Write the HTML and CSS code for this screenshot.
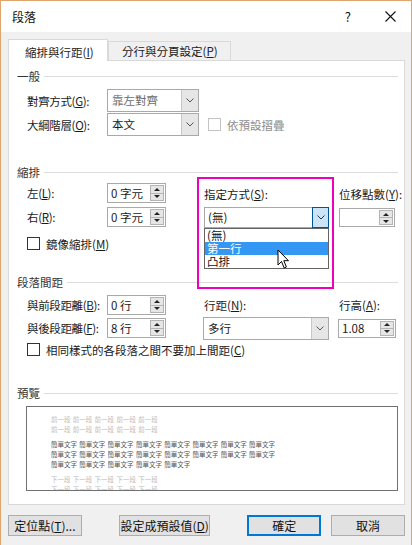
FILE: index.html
```html
<!DOCTYPE html>
<html lang="zh-Hant">
<head>
<meta charset="utf-8">
<title>段落</title>
<link rel="stylesheet" href="styles.css">
</head>
<body>
<div class="window">
  <div class="titlebar">
    <span class="title">段落</span>
    <span class="help">?</span>
    <svg class="close" width="11" height="11" viewBox="0 0 11 11"><path d="M0.5 0.5 L10.5 10.5 M10.5 0.5 L0.5 10.5" stroke="#111" stroke-width="1.1" fill="none"/></svg>
  </div>
  <div class="client">
    <div class="tabs">
      <div class="tab active">縮排與行距(<u>I</u>)</div>
      <div class="tab">分行與分頁設定(<u>P</u>)</div>
    </div>
    <div class="panel">
      <div class="gtitle">一般</div>
      <div class="rows r-general">
        <div class="row">
          <span class="lbl">對齊方式(<u>G</u>):</span>
          <div class="combo w92"><span class="val gray">靠左對齊</span><span class="btn"><svg width="8" height="5" viewBox="0 0 8 5"><polyline points="0.5,0.5 4,4 7.5,0.5" fill="none" stroke="#555"/></svg></span></div>
        </div>
        <div class="row r2">
          <span class="lbl">大綱階層(<u>O</u>):</span>
          <div class="combo w92"><span class="val">本文</span><span class="btn"><svg width="8" height="5" viewBox="0 0 8 5"><polyline points="0.5,0.5 4,4 7.5,0.5" fill="none" stroke="#555"/></svg></span></div>
          <span class="cb disabled ml9"></span><span class="cbtext gray2">依預設摺疊</span>
        </div>
      </div>

      <div class="gtitle mt28">縮排</div>
      <div class="indent">
        <div class="col-left">
          <div class="row i1">
            <span class="lbl">左(<u>L</u>):</span>
            <div class="spin w59"><span class="val">0 字元</span><span class="arrows"><span class="up"></span><span class="dn"></span></span></div>
          </div>
          <div class="row i2">
            <span class="lbl">右(<u>R</u>):</span>
            <div class="spin w59"><span class="val">0 字元</span><span class="arrows"><span class="up"></span><span class="dn"></span></span></div>
          </div>
          <div class="row i3">
            <span class="cb"></span><span class="cbtext">鏡像縮排(<u>M</u>)</span>
          </div>
        </div>
        <div class="col-mid">
          <div class="mark"></div>
          <div class="clbl">指定方式(<u>S</u>):</div>
          <div class="combo w125 h21 open"><span class="val">(無)</span><span class="btn blue"><svg width="8" height="5" viewBox="0 0 8 5"><polyline points="0.5,0.5 4,4 7.5,0.5" fill="none" stroke="#333"/></svg></span>
            <div class="list">
              <div class="opt">(無)</div>
              <div class="opt sel">第一行</div>
              <div class="opt">凸排</div>
              <svg class="cursor" width="13" height="21" viewBox="0 0 13 21"><path d="M1 1 L1 16 L4.5 12.5 L7.2 19 L9.4 18 L6.8 11.7 L11.5 11.7 Z" fill="#fff" stroke="#000" stroke-width="1" stroke-linejoin="round"/></svg>
            </div>
          </div>
        </div>
        <div class="col-right">
          <div class="clbl">位移點數(<u>Y</u>):</div>
          <div class="spin w56 h19 mt6"><span class="val"></span><span class="arrows"><span class="up"></span><span class="dn"></span></span></div>
        </div>
      </div>

      <div class="gtitle mt24">段落間距</div>
      <div class="spacing">
        <div class="row s1">
          <span class="lbl">與前段距離(<u>B</u>):</span>
          <div class="spin w59"><span class="val">0 行</span><span class="arrows"><span class="up"></span><span class="dn"></span></span></div>
          <span class="mlbl">行距(<u>N</u>):</span>
          <span class="rlbl">行高(<u>A</u>):</span>
        </div>
        <div class="row s2">
          <span class="lbl">與後段距離(<u>F</u>):</span>
          <div class="spin w59"><span class="val">8 行</span><span class="arrows"><span class="up"></span><span class="dn"></span></span></div>
          <div class="combo w126 h23 mlc"><span class="val">多行</span><span class="btn"><svg width="8" height="5" viewBox="0 0 8 5"><polyline points="0.5,0.5 4,4 7.5,0.5" fill="none" stroke="#555"/></svg></span></div>
          <div class="spin w58 h19 rlc"><span class="val">1.08</span><span class="arrows"><span class="up"></span><span class="dn"></span></span></div>
        </div>
        <div class="row s3">
          <span class="cb"></span><span class="cbtext">相同樣式的各段落之間不要加上間距(<u>C</u>)</span>
        </div>
      </div>

      <div class="gtitle mt29">預覽</div>
      <div class="preview">
        <div class="pl light"><span>前一段</span><span>前一段</span><span>前一段</span><span>前一段</span><span>前一段</span></div>
        <div class="pl light"><span>前一段</span><span>前一段</span><span>前一段</span><span>前一段</span><span>前一段</span></div>
        <div class="pl dark gap"><span>簡單文字</span><span>簡單文字</span><span>簡單文字</span><span>簡單文字</span><span>簡單文字</span><span>簡單文字</span><span>簡單文字</span><span>簡單文字</span></div>
        <div class="pl dark"><span>簡單文字</span><span>簡單文字</span><span>簡單文字</span><span>簡單文字</span><span>簡單文字</span><span>簡單文字</span><span>簡單文字</span><span>簡單文字</span></div>
        <div class="pl dark"><span>簡單文字</span><span>簡單文字</span><span>簡單文字</span><span>簡單文字</span><span>簡單文字</span></div>
        <div class="pl light gap"><span>下一段</span><span>下一段</span><span>下一段</span><span>下一段</span><span>下一段</span></div>
        <div class="pl light"><span>下一段</span><span>下一段</span><span>下一段</span><span>下一段</span><span>下一段</span></div>
      </div>
    </div>
    <div class="footer">
      <div class="button w74">定位點(<u>T</u>)...</div>
      <div class="button w92 ml37">設定成預設值(<u>D</u>)</div>
      <div class="button w74 ml37 primary">確定</div>
      <div class="button w74 ml10">取消</div>
    </div>
  </div>
</div>
</body>
</html>
```

FILE: styles.css
```css
* { box-sizing: border-box; }
body {
  margin: 0;
  font-family: "Noto Sans CJK TC", "Noto Sans", sans-serif;
  font-size: 11.5px;
  color: #1a1a1a;
}
u { text-decoration: underline; text-underline-offset: 1px; }

.window {
  width: 412px;
  height: 545px;
  border: 1px solid #dfa56b;
  border-bottom: none;
  background: #f0f0f0;
  overflow: hidden;
  display: flex;
  flex-direction: column;
}
.titlebar {
  height: 31px;
  flex: none;
  background: #fff;
  display: flex;
  align-items: center;
  padding-left: 11px;
}
.title { flex: 1; font-size: 12px; line-height: 16px; color: #111; }
.help { font-size: 13px; line-height: 16px; margin-right: 34px; color: #111; }
.close { margin-right: 15px; }

.client { padding: 7px 6px 0 7px; flex: 1; }

.tabs {
  display: flex;
  align-items: flex-end;
  height: 22px;
  position: relative;
  z-index: 1;
}
.tab {
  width: 123px;
  height: 19px;
  margin-bottom: 1px;
  border: 1px solid #d9d9d9;
  border-bottom: none;
  background: #f0f0f0;
  line-height: 19px;
  padding-left: 13px;
  color: #222;
}
.tab.active {
  width: 100px;
  height: 22px;
  margin-bottom: 0;
  background: #fff;
  padding-left: 16px;
  padding-top: 2px;
  line-height: 20px;
}

.panel {
  margin-top: -1px;
  height: 445px;
  background: #fff;
  border: 1px solid #d9d9d9;
  padding: 7px 6px 0 8px;
}
.gtitle {
  display: flex;
  align-items: center;
  height: 16px;
  line-height: 16px;
  color: #333;
}
.gtitle::after {
  content: "";
  flex: 1;
  border-top: 1px solid #dcdcdc;
  margin-left: 4px;
}
.mt28 { margin-top: 28px; }
.mt24 { margin-top: 24px; }
.mt29 { margin-top: 29px; }
.mt6 { margin-top: 6px; }

.row { display: flex; align-items: center; }
.lbl { width: 80px; flex: none; line-height: 16px; white-space: nowrap; letter-spacing: -0.35px; }

.r-general { margin: 5px 0 0 10px; }
.r-general .row { height: 23px; }
.r-general .r2 { margin-top: 1px; }

.combo {
  position: relative;
  display: flex;
  height: 23px;
  border: 1px solid #a9a9a9;
  background: #fff;
}
.combo .val { flex: 1; padding-left: 4px; line-height: 21px; }
.combo .btn {
  width: 17px;
  background: #e6e6e6;
  border-left: 1px solid #c8c8c8;
  display: flex;
  align-items: center;
  justify-content: center;
}
.combo .btn.blue {
  width: 17px;
  background: #cce4f7;
  border: 1px solid #005499;
  margin: -1px -1px -1px 0;
}
.w92 { width: 92px; }
.w125 { width: 125px; }
.w126 { width: 126px; }
.h21 { height: 21px; }
.h21 .val { line-height: 19px; padding-left: 3px; }
.h23 { height: 23px; }
.gray { color: #6d6d6d; }
.gray2 { color: #8d8d8d; }

.cb {
  width: 13px;
  height: 13px;
  flex: none;
  border: 1px solid #333;
  background: #fff;
}
.cb.disabled { border-color: #c4c4c4; }
.ml9 { margin-left: 9px; }
.cbtext { margin-left: 6px; line-height: 16px; white-space: nowrap; }

.spin {
  display: flex;
  flex: none;
  height: 20px;
  border: 1px solid #a9a9a9;
  background: #fff;
}
.spin .val { flex: 1; padding-left: 3px; line-height: 18px; }
.spin .arrows {
  width: 14px;
  margin: 1px 1px 1px 0;
  display: flex;
  flex-direction: column;
  border: 1px solid #b4b4b4;
  background: #e6e6e6;
}
.spin .arrows span {
  flex: 1;
  display: flex;
  align-items: center;
  justify-content: center;
}
.spin .arrows .dn { border-top: 1px solid #b4b4b4; }
.spin .arrows .up::before {
  content: "";
  border-left: 3px solid transparent;
  border-right: 3px solid transparent;
  border-bottom: 3px solid #222;
}
.spin .arrows .dn::before {
  content: "";
  border-left: 3px solid transparent;
  border-right: 3px solid transparent;
  border-top: 3px solid #222;
}
.w59 { width: 59px; }
.w58 { width: 58px; }
.w56 { width: 56px; }
.h19 { height: 19px; }
.h19 .val { line-height: 17px; }

.indent { display: flex; margin-left: 10px; }
.col-left { width: 139px; }
.col-left .i1 { margin-top: 3px; }
.col-left .i2 { margin-top: 4px; }
.col-left .i3 { margin-top: 10px; height: 13px; }
.col-mid { position: relative; margin-left: 38px; width: 125px; }
.col-right { margin-left: 10px; width: 56px; }
.clbl { margin-top: 6px; line-height: 16px; white-space: nowrap; }
.col-mid .combo { margin-top: 5px; }

.mark {
  position: absolute;
  left: -7px;
  top: -3px;
  width: 137px;
  height: 112px;
  border: 2px solid #ee00bf;
}
.list {
  position: absolute;
  left: -1px;
  top: 20px;
  width: 125px;
  height: 41px;
  background: #fff;
  border: 1px solid #646464;
  z-index: 2;
}
.opt { height: 13px; line-height: 13px; padding-left: 2px; color: #111; }
.opt.sel {
  background: #3397f3;
  color: #fff;
  outline: 1px dotted #c07a30;
  outline-offset: -1px;
}
.cursor { position: absolute; left: 72px; top: 20px; }

.spacing { margin: 5px 0 0 10px; }
.spacing .row { height: 20px; }
.spacing .s2 { margin-top: 3px; }
.spacing .s3 { margin-top: 5px; height: 13px; }
.mlbl { margin-left: 38px; width: 135px; line-height: 16px; }
.rlbl { line-height: 16px; }
.mlc { margin-left: 37px; }
.rlc { margin-left: 9px; }

.preview {
  margin: 5px 0 0 9px;
  width: 372px;
  height: 85px;
  border: 1px solid #707070;
  padding: 7px 0 0 24px;
  overflow: hidden;
}
.pl {
  display: flex;
  gap: 2.3px;
  font-size: 6.5px;
  line-height: 10px;
  height: 10px;
  white-space: nowrap;
}
.pl.light span { width: 19.5px; }
.pl.dark span { width: 26px; }
.pl span { flex: none; overflow: hidden; }
.pl.light { color: #bdbdbd; }
.pl.dark { color: #555; }
.pl.gap { margin-top: 5px; }

.footer { display: flex; margin-top: 10px; }
.button {
  height: 21px;
  border: 1px solid #adadad;
  background: #e1e1e1;
  display: flex;
  align-items: center;
  justify-content: center;
  line-height: 16px;
  color: #111;
  white-space: nowrap;
  font-size: 12px;
}
.button.primary { border: 2px solid #0078d7; }
.w74 { width: 74px; }
.ml37 { margin-left: 37px; }
.ml10 { margin-left: 10px; }
```
